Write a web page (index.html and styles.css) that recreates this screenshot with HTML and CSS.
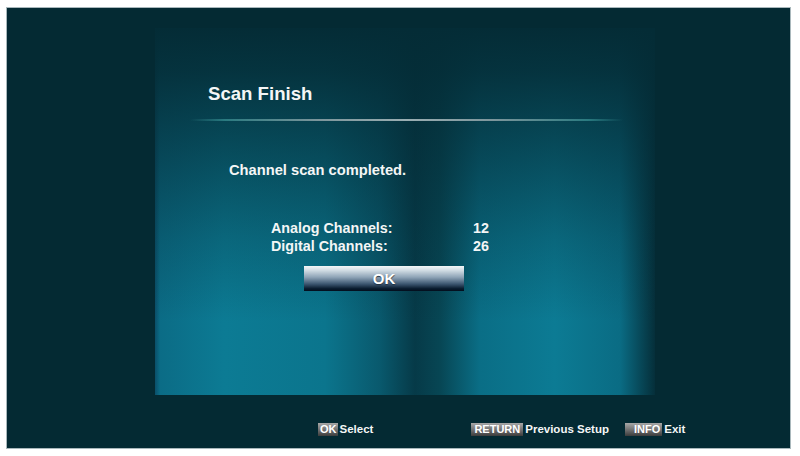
FILE: index.html
```html
<!DOCTYPE html>
<html lang="en">
<head>
  <meta charset="UTF-8">
  <meta
    name="viewport"
    content="width=device-width, initial-scale=1.0">
  <title>Scan Finish</title>

  <link rel="stylesheet" href="styles.css">

</head>
<body>
  <div class="screen">
    <main class="panel">
      <h1>Scan Finish</h1>
      <div class="rule"></div>
      <p class="status">Channel scan completed.</p>
      <dl class="counts">
        <dt>Analog Channels:</dt>
        <dd>12</dd>
        <dt>Digital Channels:</dt>
        <dd>26</dd>
      </dl>
      <button class="ok">OK</button>
    </main>
    <footer class="keys">
      <span class="key">OK</span><span class="hint">Select</span>
      <span class="key key-return">RETURN</span><span class="hint">Previous Setup</span>
      <span class="key key-info">INFO</span><span class="hint">Exit</span>
    </footer>
  </div>
</body>
</html>
```

FILE: styles.css
```css
:root {
  --screen: #042a33;
  --edge: #a9b8bc;
  --light: #f4f6f6;
}

body {
  margin: 0;
  padding: 0;
  background-color: #fff;
  font-family: "Liberation Sans", Arial, sans-serif;
  font-weight: bold;
  color: var(--light);
}

.screen {
  box-sizing: border-box;
  width: 785px;
  height: 442px;
  margin: 7px 0 0 6px;
  border: 1px solid var(--edge);
  background-color: var(--screen);

  display: flex;
  flex-direction: column;
}

.panel {
  box-sizing: border-box;
  width: 500px;
  height: 367px;
  margin: 20px 0 0 148px;
  padding-top: 55px;

  display: flex;
  flex-direction: column;
  align-items: flex-start;

  background:
    linear-gradient(to bottom,
      rgba(4, 44, 54, 1) 0%,
      rgba(4, 44, 54, 0.9) 12%,
      rgba(4, 44, 54, 0.62) 32%,
      rgba(4, 44, 54, 0.25) 58%,
      rgba(4, 44, 54, 0) 80%),
    linear-gradient(to right,
      #0a4f6a 0%,
      #0b6c86 1%,
      #0c7b94 14%,
      #0b758d 34%,
      #09596d 45%,
      #063a48 52%,
      #074654 57%,
      #0a6e86 65%,
      #0c7b94 80%,
      #0a6c84 93%,
      #052f3a 100%);
}

h1 {
  margin: 0 0 0 53px;
  font-size: 18.6px;
  line-height: 22px;
}

.rule {
  width: 433px;
  height: 2px;
  margin: 14px 0 0 35px;
  background: linear-gradient(to right,
    rgba(40, 110, 120, 0),
    #2a7a80 8%,
    #7d969c 30%,
    #9aaeb2 50%,
    #7d969c 70%,
    #2a7a80 92%,
    rgba(40, 110, 120, 0));
}

.status {
  margin: 40px 0 0 74px;
  font-size: 14.7px;
  line-height: 18px;
}

.counts {
  margin: 40px 0 0 116px;
  display: grid;
  grid-template-columns: 202px auto;
  font-size: 14.3px;
  line-height: 18px;
}

.counts dd {
  margin: 0;
}

.ok {
  width: 160px;
  height: 25px;
  margin: 11px 0 0 149px;
  padding: 0;
  border: 0;
  font-family: inherit;
  font-weight: bold;
  font-size: 15px;
  color: #fff;
  text-shadow: 0 1px 1px #203040;
  background: linear-gradient(to bottom,
    #f4f7f8 0%,
    #d0dbe3 18%,
    #8ea3b6 45%,
    #3c5670 72%,
    #0b1d30 90%,
    #020d1c 100%);
}

.keys {
  margin: 28px 0 0 311px;
  display: flex;
  align-items: center;
  font-size: 11.5px;
  line-height: 13px;
}

.key {
  height: 13px;
  padding: 0 1px 0 2px;
  font-size: 11px;
  color: #fff;
  background: linear-gradient(to bottom, #a8a8a8 0%, #6e6e6e 55%, #3c3c3c 100%);
}

.hint {
  margin-left: 2px;
}

.key-return {
  margin-left: 98px;
  padding: 0 3px;
}

.key-info {
  margin-left: 16px;
  padding: 0 2px 0 9px;
}
```
